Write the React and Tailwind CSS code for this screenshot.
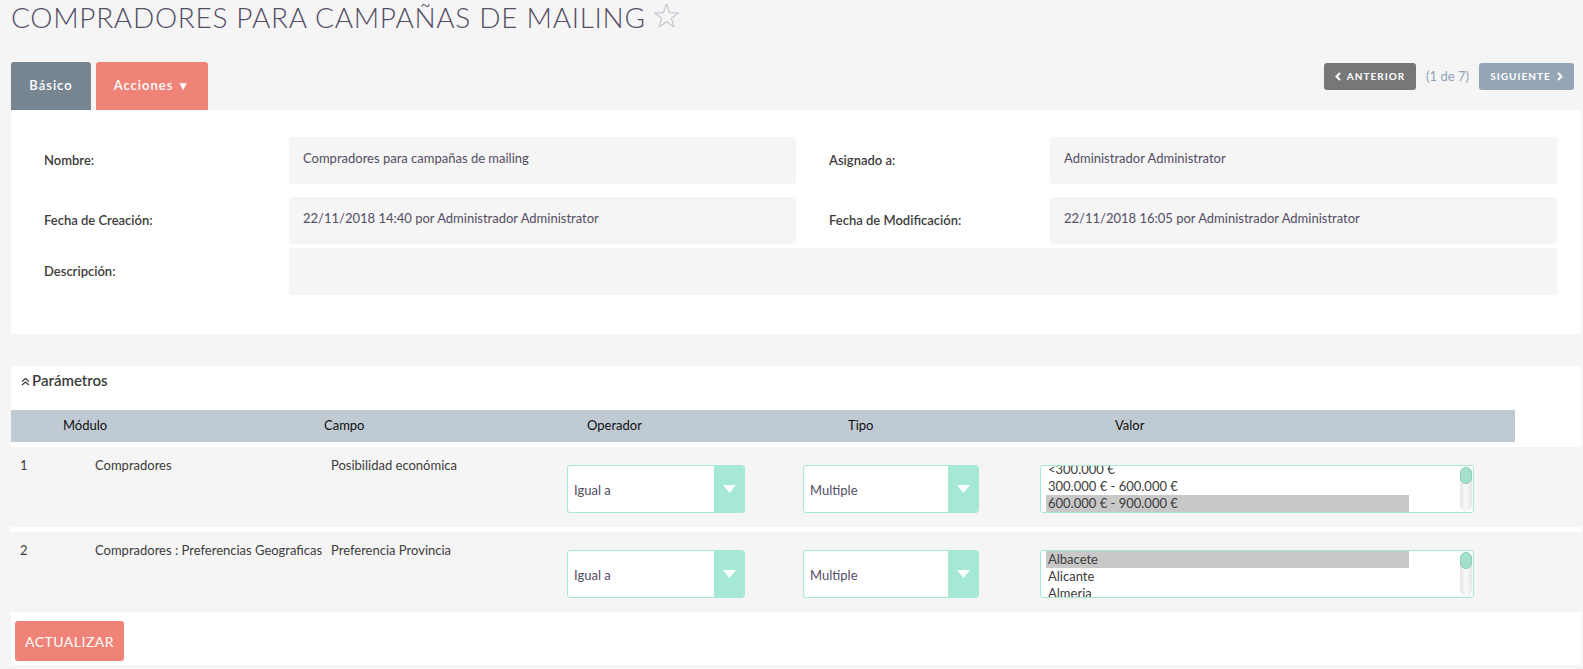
import React from "react";

const font = { fontFamily: "Lato, 'Open Sans', sans-serif" };

function Star() {
  return (
    <svg width="27" height="26" viewBox="0 0 27 26" className="ml-[7px] mt-[3px]">
      <polygon
        points="13.5,1 16.6,9.6 25.6,9.8 18.4,15.3 21,24 13.5,18.8 6,24 8.6,15.3 1.4,9.8 10.4,9.6"
        fill="none"
        stroke="#c3cad2"
        strokeWidth="1.2"
        strokeLinejoin="round"
      />
    </svg>
  );
}

function Select({ value, width }) {
  return (
    <div className={`flex h-[48px] ${width} rounded-[3px] border border-[#a5e8d6] bg-white overflow-hidden`}>
      <div className="flex-1 flex items-center pl-[6px] pt-[4px] text-[13px] text-[#534d64]">{value}</div>
      <div className="w-[30px] bg-[#a5e8d6] flex items-center justify-center">
        <svg width="13" height="8" viewBox="0 0 13 8">
          <polygon points="0,0 13,0 6.5,8" fill="#ffffff" />
        </svg>
      </div>
    </div>
  );
}

function ListBox({ options, selected, offset }) {
  return (
    <div className="relative h-[48px] w-[434px] rounded-[3px] border border-[#a5e8d6] bg-white overflow-hidden">
      <div className="pl-[5px] pr-[64px]" style={{ marginTop: offset }}>
        {options.map((o, i) => (
          <div
            key={i}
            className={`h-[17px] leading-[17px] text-[13px] pl-[2px] text-[#3c3c3c] ${i === selected ? "bg-[#c8c8c8]" : ""}`}
          >
            {o}
          </div>
        ))}
      </div>
      <div className="absolute right-[1px] top-[1px] bottom-[1px] w-[12px] rounded-[6px] bg-gradient-to-r from-[#e6e6e6] via-[#fafafa] to-[#e6e6e6]">
        <div className="h-[17px] w-[12px] rounded-[6px] bg-[#a5e0cd] border border-[#8ccdb8]" />
      </div>
    </div>
  );
}

function DetailLabel({ children, className = "" }) {
  return (
    <div className={`flex items-center text-[13px] font-semibold text-[#3c3c3c] ${className}`}>{children}</div>
  );
}

function DetailValue({ children, className = "" }) {
  return (
    <div className={`flex-1 h-[47px] rounded-[4px] bg-[#f5f5f5] flex items-center px-[14px] pb-[3px] text-[13px] text-[#534d64] ${className}`}>
      {children}
    </div>
  );
}

export default function App() {
  return (
    <div className="min-h-[669px] w-[1583px] bg-[#f5f5f5] pl-[11px] pr-[2px]" style={font}>
      {/* Title */}
      <div className="flex items-start h-[34px]">
        <h1 className="text-[28px] leading-[34px] font-light tracking-[0.7px] text-[#534d64]">
          COMPRADORES PARA CAMPAÑAS DE MAILING
        </h1>
        <Star />
      </div>

      {/* Tabs row */}
      <div className="mt-[28px] flex items-start justify-between">
        <div className="flex gap-[5px]">
          <div className="h-[48px] w-[80px] rounded-t-[3px] bg-[#778591] flex items-center justify-center text-white text-[13px] font-semibold tracking-[1px]">
            Básico
          </div>
          <div className="h-[48px] w-[112px] rounded-t-[3px] bg-[#f08377] flex items-center justify-center text-white text-[13px] font-semibold tracking-[1px]">
            Acciones <span className="ml-[4px] text-[12px]">▼</span>
          </div>
        </div>
        <div className="flex items-center mt-[1px] mr-[7px]">
          <div className="h-[27px] w-[92px] rounded-[3px] bg-[#777777] flex items-center justify-center gap-[6px] text-white text-[10px] font-bold tracking-[1px]">
            <svg width="6" height="9" viewBox="0 0 6 9">
              <polyline points="5,1 1.5,4.5 5,8" fill="none" stroke="#fff" strokeWidth="2" />
            </svg>
            ANTERIOR
          </div>
          <div className="w-[63px] text-center text-[13px] text-[#8fa3b8]">(1 de 7)</div>
          <div className="h-[27px] w-[95px] rounded-[3px] bg-[#94a5b5] flex items-center justify-center gap-[6px] text-white text-[10px] font-bold tracking-[1px]">
            SIGUIENTE
            <svg width="6" height="9" viewBox="0 0 6 9">
              <polyline points="1,1 4.5,4.5 1,8" fill="none" stroke="#fff" strokeWidth="2" />
            </svg>
          </div>
        </div>
      </div>

      {/* Detail panel */}
      <div className="bg-white pl-[33px] pr-[24px] pt-[27px] pb-[39px]">
        <div className="flex">
          <DetailLabel className="w-[245px]">Nombre:</DetailLabel>
          <DetailValue>Compradores para campañas de mailing</DetailValue>
          <DetailLabel className="w-[254px] pl-[33px]">Asignado a:</DetailLabel>
          <DetailValue>Administrador Administrator</DetailValue>
        </div>
        <div className="flex mt-[13px]">
          <DetailLabel className="w-[245px]">Fecha de Creación:</DetailLabel>
          <DetailValue>22/11/2018 14:40 por Administrador Administrator</DetailValue>
          <DetailLabel className="w-[254px] pl-[33px]">Fecha de Modificación:</DetailLabel>
          <DetailValue>22/11/2018 16:05 por Administrador Administrator</DetailValue>
        </div>
        <div className="flex mt-[4px]">
          <DetailLabel className="w-[245px]">Descripción:</DetailLabel>
          <DetailValue></DetailValue>
        </div>
      </div>

      {/* Parameters panel */}
      <div className="mt-[32px] bg-white pb-[4px]">
        <div className="h-[44px] flex items-center pl-[10px] pb-[15px] text-[15px] font-semibold text-[#3c3c3c]">
          <svg width="9" height="9" viewBox="0 0 9 9" className="mr-[2px] mt-[2px]">
            <polyline points="1,4.5 4.5,1.5 8,4.5" fill="none" stroke="#3c3c3c" strokeWidth="1.3" />
            <polyline points="1,8 4.5,5 8,8" fill="none" stroke="#3c3c3c" strokeWidth="1.3" />
          </svg>
          Parámetros
        </div>
        <div className="w-[1504px] h-[32px] bg-[#c0cad3] flex items-center pl-[52px] text-[13px] text-[#111111]">
          <div className="w-[261px]">Módulo</div>
          <div className="w-[263px]">Campo</div>
          <div className="w-[261px]">Operador</div>
          <div className="w-[267px]">Tipo</div>
          <div>Valor</div>
        </div>

        {/* Row 1 */}
        <div className="mt-[5px] h-[80px] bg-[#f5f5f5] flex text-[13px] text-[#3c3c3c]">
          <div className="w-[84px] pl-[9px] pt-[9px]">1</div>
          <div className="w-[236px] pt-[9px]">Compradores</div>
          <div className="w-[236px] pt-[9px]">Posibilidad económica</div>
          <div className="w-[236px] pt-[18px]">
            <Select value="Igual a" width="w-[178px]" />
          </div>
          <div className="w-[237px] pt-[18px]">
            <Select value="Multiple" width="w-[176px]" />
          </div>
          <div className="pt-[18px]">
            <ListBox
              options={["<300.000 €", "300.000 € - 600.000 €", "600.000 € - 900.000 €", "900.000 € - 1.200.000 €"]}
              selected={2}
              offset="-5px"
            />
          </div>
        </div>

        {/* Row 2 */}
        <div className="mt-[5px] h-[80px] bg-[#f5f5f5] flex text-[13px] text-[#3c3c3c]">
          <div className="w-[84px] pl-[9px] pt-[9px]">2</div>
          <div className="w-[236px] pt-[9px] whitespace-nowrap">Compradores : Preferencias Geograficas</div>
          <div className="w-[236px] pt-[9px]">Preferencia Provincia</div>
          <div className="w-[236px] pt-[18px]">
            <Select value="Igual a" width="w-[178px]" />
          </div>
          <div className="w-[237px] pt-[18px]">
            <Select value="Multiple" width="w-[176px]" />
          </div>
          <div className="pt-[18px]">
            <ListBox options={["Albacete", "Alicante", "Almeria", "Avila"]} selected={0} offset="0px" />
          </div>
        </div>

        <div className="pt-[9px] pl-[4px]">
          <button className="h-[40px] w-[109px] rounded-[3px] bg-[#f08377] text-white text-[14px] tracking-[0.5px]">
            ACTUALIZAR
          </button>
        </div>
      </div>
    </div>
  );
}
